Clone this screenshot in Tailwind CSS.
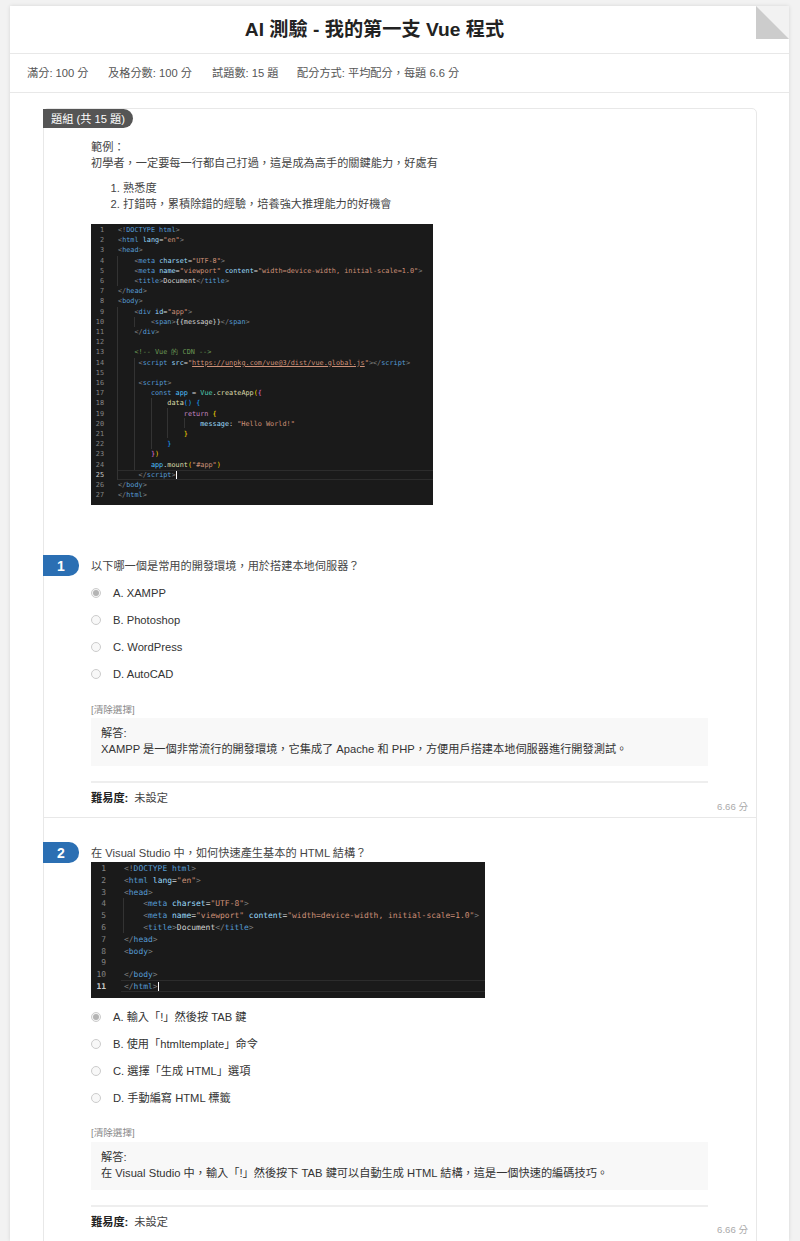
<!DOCTYPE html>
<html lang="zh-Hant">
<head>
    <meta charset="UTF-8">
    <title>AI 測驗 - 我的第一支 Vue 程式</title>
    <script src="https://cdn.jsdelivr.net/npm/@tailwindcss/browser@4"></script>
</head>
<body class="bg-[#f2f2f2] h-[1241px] overflow-hidden pt-[6px] font-['Liberation_Sans','Noto_Sans_CJK_TC',sans-serif] text-[11.2px] leading-[16px] text-[#444]">

    <div class="relative ml-[10px] w-[779px] h-[1235px] bg-white shadow-[0_0_4px_rgba(0,0,0,0.12)]">

        <!-- folded corner -->
        <div class="absolute top-0 right-0 w-[33px] h-[33px] bg-[#f2f2f2]"></div>
        <div class="absolute top-0 right-0 w-[33px] h-[33px] bg-[#cccccc] [clip-path:polygon(0_0,0_100%,100%_100%)]"></div>

        <header class="h-[48px] flex items-center justify-center pr-[50px] border-b border-[#e8e8e8]">
            <h1 class="text-[19.2px] font-bold text-[#222]">AI 測驗 - 我的第一支 Vue 程式</h1>
        </header>

        <div class="h-[39px] flex items-center pl-[17px] border-b border-[#e8e8e8] text-[#555]">
            <span class="w-[81px]">滿分: 100 分</span>
            <span class="w-[104px]">及格分數: 100 分</span>
            <span class="w-[85px]">試題數: 15 題</span>
            <span>配分方式: 平均配分，每題 6.6 分</span>
        </div>

        <!-- question group -->
        <div class="relative mt-[15px] ml-[33px] w-[714px] h-[1140px] border border-[#e8e8e8] rounded-t-[5px]">
            <div class="absolute -left-px top-0 w-[90px] h-[19px] flex items-center justify-center bg-[#555] rounded-r-[10px] text-white">題組 (共 15 題)</div>

            <div class="pl-[47px] pr-[48px] pt-[30px]">
                <p>範例：</p>
                <p>初學者，一定要每一行都自己打過，這是成為高手的關鍵能力，好處有</p>
                <ol class="mt-[9px] pl-[32px] list-decimal">
                    <li>熟悉度</li>
                    <li>打錯時，累積除錯的經驗，培養強大推理能力的好機會</li>
                </ol>

                <!-- code screenshot 1 -->
                <div class="relative mt-[12px] w-[342px] h-[281px] bg-[#1a1a1a] overflow-hidden flex pt-px font-['DejaVu_Sans_Mono',monospace] text-[6.83px] leading-[10.2px] text-[#d4d4d4]">
                    <div class="absolute left-[26px] right-0 top-[245.8px] h-[10.4px] border-y border-[#2c2c2c]"></div>
                    <div class="absolute left-[26px] top-[32px] w-px h-[30px] bg-[#333]"></div>
                    <div class="absolute left-[26px] top-[83px] w-px h-[173px] bg-[#333]"></div>
                    <div class="absolute left-[43px] top-[93px] w-px h-[10px] bg-[#333]"></div>
                    <div class="absolute left-[43px] top-[134px] w-px h-[112px] bg-[#333]"></div>
                    <div class="absolute left-[60px] top-[174px] w-px h-[51px] bg-[#333]"></div>
                    <div class="absolute left-[76px] top-[184px] w-px h-[30px] bg-[#333]"></div>
                    <div class="absolute left-[93px] top-[194px] w-px h-[10px] bg-[#333]"></div>
                    <pre class="relative w-[13px] text-right text-[#858585] font-[inherit]">1
2
3
4
5
6
7
8
9
10
11
12
13
14
15
16
17
18
19
20
21
22
23
24
<span class="text-[#cccccc]">25</span>
26
27</pre>
                    <pre class="relative ml-[14px] font-[inherit]"><span class="text-[#808080]">&lt;!</span><span class="text-[#569cd6]">DOCTYPE html</span><span class="text-[#808080]">&gt;</span>
<span class="text-[#808080]">&lt;</span><span class="text-[#569cd6]">html</span> <span class="text-[#9cdcfe]">lang</span>=<span class="text-[#ce9178]">"en"</span><span class="text-[#808080]">&gt;</span>
<span class="text-[#808080]">&lt;</span><span class="text-[#569cd6]">head</span><span class="text-[#808080]">&gt;</span>
    <span class="text-[#808080]">&lt;</span><span class="text-[#569cd6]">meta</span> <span class="text-[#9cdcfe]">charset</span>=<span class="text-[#ce9178]">"UTF-8"</span><span class="text-[#808080]">&gt;</span>
    <span class="text-[#808080]">&lt;</span><span class="text-[#569cd6]">meta</span> <span class="text-[#9cdcfe]">name</span>=<span class="text-[#ce9178]">"viewport"</span> <span class="text-[#9cdcfe]">content</span>=<span class="text-[#ce9178]">"width=device-width, initial-scale=1.0"</span><span class="text-[#808080]">&gt;</span>
    <span class="text-[#808080]">&lt;</span><span class="text-[#569cd6]">title</span><span class="text-[#808080]">&gt;</span>Document<span class="text-[#808080]">&lt;/</span><span class="text-[#569cd6]">title</span><span class="text-[#808080]">&gt;</span>
<span class="text-[#808080]">&lt;/</span><span class="text-[#569cd6]">head</span><span class="text-[#808080]">&gt;</span>
<span class="text-[#808080]">&lt;</span><span class="text-[#569cd6]">body</span><span class="text-[#808080]">&gt;</span>
    <span class="text-[#808080]">&lt;</span><span class="text-[#569cd6]">div</span> <span class="text-[#9cdcfe]">id</span>=<span class="text-[#ce9178]">"app"</span><span class="text-[#808080]">&gt;</span>
        <span class="text-[#808080]">&lt;</span><span class="text-[#569cd6]">span</span><span class="text-[#808080]">&gt;</span>{{message}}<span class="text-[#808080]">&lt;/</span><span class="text-[#569cd6]">span</span><span class="text-[#808080]">&gt;</span>
    <span class="text-[#808080]">&lt;/</span><span class="text-[#569cd6]">div</span><span class="text-[#808080]">&gt;</span>

    <span class="text-[#6a9955]">&lt;!-- Vue 的 CDN --&gt;</span>
     <span class="text-[#808080]">&lt;</span><span class="text-[#569cd6]">script</span> <span class="text-[#9cdcfe]">src</span>=<span class="text-[#ce9178]">"<span class="underline">https://unpkg.com/vue@3/dist/vue.global.js</span>"</span><span class="text-[#808080]">&gt;&lt;/</span><span class="text-[#569cd6]">script</span><span class="text-[#808080]">&gt;</span>

     <span class="text-[#808080]">&lt;</span><span class="text-[#569cd6]">script</span><span class="text-[#808080]">&gt;</span>
        <span class="text-[#569cd6]">const</span> <span class="text-[#4fc1ff]">app</span> = <span class="text-[#4ec9b0]">Vue</span>.<span class="text-[#dcdcaa]">createApp</span><span class="text-[#ffd700]">(</span><span class="text-[#da70d6]">{</span>
            <span class="text-[#dcdcaa]">data</span><span class="text-[#179fff]">()</span> <span class="text-[#179fff]">{</span>
                <span class="text-[#c586c0]">return</span> <span class="text-[#ffd700]">{</span>
                    <span class="text-[#9cdcfe]">message</span>: <span class="text-[#ce9178]">"Hello World!"</span>
                <span class="text-[#ffd700]">}</span>
            <span class="text-[#179fff]">}</span>
        <span class="text-[#da70d6]">}</span><span class="text-[#ffd700]">)</span>
        <span class="text-[#4fc1ff]">app</span>.<span class="text-[#dcdcaa]">mount</span><span class="text-[#ffd700]">(</span><span class="text-[#ce9178]">"#app"</span><span class="text-[#ffd700]">)</span>
     <span class="text-[#808080]">&lt;/</span><span class="text-[#569cd6]">script</span><span class="text-[#808080]">&gt;</span><span class="border-l border-white"></span>
<span class="text-[#808080]">&lt;/</span><span class="text-[#569cd6]">body</span><span class="text-[#808080]">&gt;</span>
<span class="text-[#808080]">&lt;/</span><span class="text-[#569cd6]">html</span><span class="text-[#808080]">&gt;</span></pre>
                </div>

                <!-- question 1 -->
                <div class="pt-[53px] pb-[11px] -ml-[47px] -mr-[48px] pl-[47px] pr-[48px] relative border-b border-[#e8e8e8]">
                    <div class="absolute -left-px top-[50px] w-[36px] h-[21px] flex items-center justify-center bg-[#2b6fb3] rounded-r-[10px] text-white text-[14px] font-bold">1</div>
                    <p>以下哪一個是常用的開發環境，用於搭建本地伺服器？</p>
                    <div class="mt-[5px] text-[#333]">
                        <div class="h-[27px] flex items-center gap-[12px]"><span class="w-[10px] h-[10px] rounded-full border border-[#ccc] bg-[#f4f4f4] flex items-center justify-center"><span class="w-[6px] h-[6px] rounded-full bg-[#b4b4b4]"></span></span>A. XAMPP</div>
                        <div class="h-[27px] flex items-center gap-[12px]"><span class="w-[10px] h-[10px] rounded-full border border-[#ccc] bg-[#f8f8f8]"></span>B. Photoshop</div>
                        <div class="h-[27px] flex items-center gap-[12px]"><span class="w-[10px] h-[10px] rounded-full border border-[#ccc] bg-[#f8f8f8]"></span>C. WordPress</div>
                        <div class="h-[27px] flex items-center gap-[12px]"><span class="w-[10px] h-[10px] rounded-full border border-[#ccc] bg-[#f8f8f8]"></span>D. AutoCAD</div>
                    </div>
                    <p class="mt-[15px] text-[9.6px] text-[#888]">[清除選擇]</p>
                    <div class="h-[48px] pt-[7px] pl-[10px] bg-[#f8f8f8] text-[#333]">
                        <p>解答:</p>
                        <p>XAMPP 是一個非常流行的開發環境，它集成了 Apache 和 PHP，方便用戶搭建本地伺服器進行開發測試。</p>
                    </div>
                    <div class="mt-[15px] h-[2px] bg-[#eeeeee]"></div>
                    <p class="mt-[7px]"><b class="text-[#222] mr-[6px]">難易度:</b>未設定</p>
                    <span class="absolute right-[8px] bottom-[2px] text-[9.6px] text-[#aaa]">6.66 分</span>
                </div>

                <!-- question 2 -->
                <div class="pt-[27px] relative">
                    <div class="absolute -left-[48px] top-[24px] w-[36px] h-[21px] flex items-center justify-center bg-[#2b6fb3] rounded-r-[10px] text-white text-[14px] font-bold">2</div>
                    <p>在 Visual Studio 中，如何快速產生基本的 HTML 結構？</p>

                    <!-- code screenshot 2 -->
                    <div class="relative mt-px w-[394px] h-[136px] bg-[#1a1a1a] overflow-hidden flex pt-px font-['DejaVu_Sans_Mono',monospace] text-[7.97px] leading-[11.8px] text-[#d4d4d4]">
                        <div class="absolute left-[30px] right-0 top-[118px] h-[12px] border-y border-[#2c2c2c]"></div>
                        <div class="absolute left-[32px] top-[36px] w-px h-[35px] bg-[#333]"></div>
                        <pre class="relative w-[15px] text-right text-[#858585] font-[inherit]">1
2
3
4
5
6
7
8
9
10
<b class="text-[#cccccc]">11</b></pre>
                        <pre class="relative ml-[18px] font-[inherit]"><span class="text-[#808080]">&lt;!</span><span class="text-[#569cd6]">DOCTYPE html</span><span class="text-[#808080]">&gt;</span>
<span class="text-[#808080]">&lt;</span><span class="text-[#569cd6]">html</span> <span class="text-[#9cdcfe]">lang</span>=<span class="text-[#ce9178]">"en"</span><span class="text-[#808080]">&gt;</span>
<span class="text-[#808080]">&lt;</span><span class="text-[#569cd6]">head</span><span class="text-[#808080]">&gt;</span>
    <span class="text-[#808080]">&lt;</span><span class="text-[#569cd6]">meta</span> <span class="text-[#9cdcfe]">charset</span>=<span class="text-[#ce9178]">"UTF-8"</span><span class="text-[#808080]">&gt;</span>
    <span class="text-[#808080]">&lt;</span><span class="text-[#569cd6]">meta</span> <span class="text-[#9cdcfe]">name</span>=<span class="text-[#ce9178]">"viewport"</span> <span class="text-[#9cdcfe]">content</span>=<span class="text-[#ce9178]">"width=device-width, initial-scale=1.0"</span><span class="text-[#808080]">&gt;</span>
    <span class="text-[#808080]">&lt;</span><span class="text-[#569cd6]">title</span><span class="text-[#808080]">&gt;</span>Document<span class="text-[#808080]">&lt;/</span><span class="text-[#569cd6]">title</span><span class="text-[#808080]">&gt;</span>
<span class="text-[#808080]">&lt;/</span><span class="text-[#569cd6]">head</span><span class="text-[#808080]">&gt;</span>
<span class="text-[#808080]">&lt;</span><span class="text-[#569cd6]">body</span><span class="text-[#808080]">&gt;</span>

<span class="text-[#808080]">&lt;/</span><span class="text-[#569cd6]">body</span><span class="text-[#808080]">&gt;</span>
<span class="text-[#808080]">&lt;/</span><span class="text-[#569cd6]">html</span><span class="text-[#808080]">&gt;</span><span class="border-l border-white"></span></pre>
                    </div>

                    <div class="mt-[5px] text-[#333]">
                        <div class="h-[27px] flex items-center gap-[12px]"><span class="w-[10px] h-[10px] rounded-full border border-[#ccc] bg-[#f4f4f4] flex items-center justify-center"><span class="w-[6px] h-[6px] rounded-full bg-[#b4b4b4]"></span></span>A. 輸入「!」然後按 TAB 鍵</div>
                        <div class="h-[27px] flex items-center gap-[12px]"><span class="w-[10px] h-[10px] rounded-full border border-[#ccc] bg-[#f8f8f8]"></span>B. 使用「htmltemplate」命令</div>
                        <div class="h-[27px] flex items-center gap-[12px]"><span class="w-[10px] h-[10px] rounded-full border border-[#ccc] bg-[#f8f8f8]"></span>C. 選擇「生成 HTML」選項</div>
                        <div class="h-[27px] flex items-center gap-[12px]"><span class="w-[10px] h-[10px] rounded-full border border-[#ccc] bg-[#f8f8f8]"></span>D. 手動編寫 HTML 標籤</div>
                    </div>
                    <p class="mt-[14px] text-[9.6px] text-[#888]">[清除選擇]</p>
                    <div class="mt-px h-[48px] pt-[7px] pl-[10px] bg-[#f8f8f8] text-[#333]">
                        <p>解答:</p>
                        <p>在 Visual Studio 中，輸入「!」然後按下 TAB 鍵可以自動生成 HTML 結構，這是一個快速的編碼技巧。</p>
                    </div>
                    <div class="mt-[15px] h-[2px] bg-[#eeeeee]"></div>
                    <p class="mt-[7px]"><b class="text-[#222] mr-[6px]">難易度:</b>未設定</p>
                    <span class="absolute -right-[40px] top-[404px] text-[9.6px] text-[#aaa]">6.66 分</span>
                </div>
            </div>
        </div>
    </div>
</body>
</html>
